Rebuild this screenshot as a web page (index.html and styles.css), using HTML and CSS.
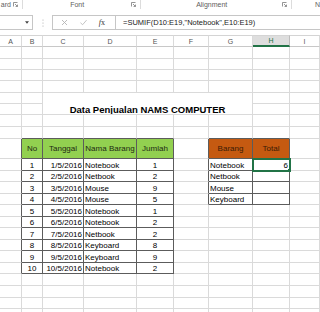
FILE: index.html
```html
<!DOCTYPE html>
<html lang="id">
<head>
  <meta charset="UTF-8" />
  <title>Data Penjualan NAMS COMPUTER</title>
  <link rel="stylesheet" href="styles.css">
</head>
<body>
  <div class="ribbon">
    <div class="grp g-clip"><span class="lbl">ard</span><svg class="launch" viewBox="0 0 5 5"><path d="M0.5 4.5V0.5H4.5M2 2L4.3 4.3M4.5 2.6V4.5H2.6"/></svg></div>
    <div class="grp g-font"><span class="lbl">Font</span><svg class="launch" viewBox="0 0 5 5"><path d="M0.5 4.5V0.5H4.5M2 2L4.3 4.3M4.5 2.6V4.5H2.6"/></svg></div>
    <div class="grp g-align"><span class="lbl">Alignment</span><svg class="launch" viewBox="0 0 5 5"><path d="M0.5 4.5V0.5H4.5M2 2L4.3 4.3M4.5 2.6V4.5H2.6"/></svg></div>
    <div class="grp g-num"><span class="lbl">N</span></div>
  </div>

  <div class="fbar">
    <div class="namebox"><svg class="drop" viewBox="0 0 5 3"><path d="M0 0H5L2.5 3Z"/></svg></div>
    <div class="grip"><svg viewBox="0 0 2 8"><circle cx="1" cy="1" r="0.6"/><circle cx="1" cy="4" r="0.6"/><circle cx="1" cy="7" r="0.6"/></svg></div>
    <div class="fxbox">
      <svg class="ico" viewBox="0 0 7 7"><path d="M1 1L6 6M6 1L1 6"/></svg>
      <svg class="ico" viewBox="0 0 8 7"><path d="M0.5 3.8L3 6L7.5 0.8"/></svg>
      <span class="fx"><i>f</i>x</span>
    </div>
    <div class="formula">=SUMIF(D10:E19,"Notebook",E10:E19)</div>
  </div>

  <table class="sheet">
    <colgroup>
      <col class="c-a"><col class="c-b"><col class="c-c"><col class="c-d"><col class="c-e"><col class="c-f"><col class="c-g"><col class="c-h"><col class="c-i">
    </colgroup>
    <tr class="hdr"><th>A</th><th>B</th><th>C</th><th>D</th><th>E</th><th>F</th><th>G</th><th class="on">H</th><th>I</th></tr>
    <tr class="h12"><td></td><td></td><td></td><td></td><td></td><td></td><td></td><td></td><td></td></tr>
    <tr class="h11"><td></td><td></td><td></td><td></td><td></td><td></td><td></td><td></td><td></td></tr>
    <tr class="h11"><td></td><td></td><td></td><td></td><td></td><td></td><td></td><td></td><td></td></tr>
    <tr class="h12"><td></td><td></td><td></td><td></td><td></td><td></td><td></td><td></td><td></td></tr>
    <tr class="h11"><td></td><td></td><td class="title" colspan="5" rowspan="2">Data Penjualan NAMS COMPUTER</td><td></td><td></td></tr>
    <tr class="h11"><td></td><td></td><td></td><td></td></tr>
    <tr class="h12"><td></td><td></td><td></td><td></td><td></td><td></td><td></td><td></td><td></td></tr>
    <tr class="h12"><td></td><td class="et"></td><td class="et"></td><td class="et"></td><td class="et"></td><td></td><td class="et"></td><td class="et"></td><td></td></tr>
    <tr class="h20 head"><td class="el"></td><td class="t green">No</td><td class="t green">Tanggal</td><td class="t green">Nama Barang</td><td class="t green">Jumlah</td><td class="el"></td><td class="t orange">Barang</td><td class="t orange">Total</td><td></td></tr>
    <tr class="h12"><td class="el"></td><td class="t mid">1</td><td class="t num">1/5/2016</td><td class="t">Notebook</td><td class="t mid">1</td><td class="el"></td><td class="t">Notebook</td><td class="t num sel">6</td><td></td></tr>
    <tr class="h11"><td class="el"></td><td class="t mid">2</td><td class="t num">2/5/2016</td><td class="t">Netbook</td><td class="t mid">2</td><td class="el"></td><td class="t">Netbook</td><td class="t"></td><td></td></tr>
    <tr class="h12"><td class="el"></td><td class="t mid">3</td><td class="t num">3/5/2016</td><td class="t">Mouse</td><td class="t mid">9</td><td class="el"></td><td class="t">Mouse</td><td class="t"></td><td></td></tr>
    <tr class="h11"><td class="el"></td><td class="t mid">4</td><td class="t num">4/5/2016</td><td class="t">Mouse</td><td class="t mid">5</td><td class="el"></td><td class="t">Keyboard</td><td class="t"></td><td></td></tr>
    <tr class="h12"><td class="el"></td><td class="t mid">5</td><td class="t num">5/5/2016</td><td class="t">Notebook</td><td class="t mid">1</td><td></td><td></td><td></td><td></td></tr>
    <tr class="h11"><td class="el"></td><td class="t mid">6</td><td class="t num">6/5/2016</td><td class="t">Notebook</td><td class="t mid">2</td><td></td><td></td><td></td><td></td></tr>
    <tr class="h12"><td class="el"></td><td class="t mid">7</td><td class="t num">7/5/2016</td><td class="t">Netbook</td><td class="t mid">2</td><td></td><td></td><td></td><td></td></tr>
    <tr class="h11"><td class="el"></td><td class="t mid">8</td><td class="t num">8/5/2016</td><td class="t">Keyboard</td><td class="t mid">8</td><td></td><td></td><td></td><td></td></tr>
    <tr class="h12"><td class="el"></td><td class="t mid">9</td><td class="t num">9/5/2016</td><td class="t">Keyboard</td><td class="t mid">9</td><td></td><td></td><td></td><td></td></tr>
    <tr class="h11"><td class="el"></td><td class="t mid">10</td><td class="t num">10/5/2016</td><td class="t">Notebook</td><td class="t mid">2</td><td></td><td></td><td></td><td></td></tr>
    <tr class="h12"><td></td><td></td><td></td><td></td><td></td><td></td><td></td><td></td><td></td></tr>
    <tr class="h12"><td></td><td></td><td></td><td></td><td></td><td></td><td></td><td></td><td></td></tr>
    <tr class="h11"><td></td><td></td><td></td><td></td><td></td><td></td><td></td><td></td><td></td></tr>
    <tr class="h11"><td></td><td></td><td></td><td></td><td></td><td></td><td></td><td></td><td></td></tr>
  </table>
</body>
</html>
```

FILE: styles.css
```css
body { margin: 0; width: 320px; height: 312px; overflow: hidden; background: #fff; font-family: "Liberation Sans", Arial, sans-serif; color: #000; }

/* ribbon group labels */
.ribbon { display: flex; height: 10px; font-size: 7px; line-height: 9px; color: #606060; }
.grp { display: flex; align-items: flex-start; box-sizing: border-box; border-right: 1px solid #dcdcdc; height: 9px; }
.grp .lbl { flex: 1; text-align: center; white-space: nowrap; overflow: hidden; }
.g-clip { width: 23px; }
.g-clip .lbl { text-align: right; padding-right: 2px; }
.g-font { width: 119px; }
.g-align { width: 151px; }
.g-num { flex: 1; border-right: none; }
.g-num .lbl { text-align: left; padding-left: 23px; }
.launch { width: 5px; height: 5px; margin: 2px 4px 0 0; fill: none; stroke: #7a7a7a; stroke-width: 0.8; }

/* formula bar */
.fbar { display: flex; height: 15px; margin-top: 5px; }
.namebox { width: 33px; box-sizing: border-box; border: 1px solid #c6c6c6; border-left: none; display: flex; align-items: center; justify-content: flex-end; padding-right: 3px; }
.drop { width: 4px; height: 3px; fill: #444; }
.grip { width: 19px; display: flex; align-items: center; justify-content: center; }
.grip svg { width: 2px; height: 8px; fill: #a8a8a8; }
.fxbox { width: 64px; box-sizing: border-box; border: 1px solid #c6c6c6; display: flex; align-items: center; justify-content: space-around; padding: 0 4px 0 2px; }
.ico { width: 7px; height: 7px; fill: none; stroke: #b4b4b4; stroke-width: 0.9; }
.fx { font-family: "Liberation Serif", serif; font-size: 8px; color: #333; }
.formula { flex: 1; box-sizing: border-box; border: 1px solid #c6c6c6; border-left: none; border-right: none; font-size: 7.5px; line-height: 13px; padding-left: 7px; color: #222; white-space: nowrap; overflow: hidden; }

/* sheet grid */
.sheet { margin-top: 5px; table-layout: fixed; width: 320px; border-spacing: 0; font-size: 8px; }
.c-a { width: 22px; } .c-b { width: 21px; } .c-c { width: 41px; } .c-d { width: 53px; } .c-e { width: 37px; }
.c-f { width: 35px; } .c-g { width: 44px; } .c-h { width: 37px; } .c-i { width: 30px; }
.sheet th, .sheet td { box-sizing: border-box; padding: 0 1px; border-right: 1px solid #dadada; border-bottom: 1px solid #dadada; white-space: nowrap; overflow: hidden; line-height: 9px; vertical-align: bottom; }
.sheet th { height: 12px; border-top: 1px solid #d4d4d4; border-bottom-color: #c8c8c8; font-weight: normal; font-size: 7px; color: #555; vertical-align: middle; }
.sheet th.on { background: #dedede; color: #217346; border-bottom: 2px solid #217346; border-right-color: #bdbdbd; }
.h11 { height: 11px; }
.h12 { height: 12px; }
.h20 { height: 20px; }

.title { text-align: center; vertical-align: middle; font-weight: bold; font-size: 9.5px; }
.et { border-bottom-color: #5c5c5c !important; }
.el { border-right-color: #5c5c5c !important; }
.t { border-right-color: #5c5c5c !important; border-bottom-color: #5c5c5c !important; }
.head td { vertical-align: middle; text-align: center; }
.green { background: #92d050; color: #1e2a14; }
.orange { background: #c55a11; color: #3a1a05; }
.mid { text-align: center; }
.num { text-align: right; }
.sel { position: relative; outline: 2px solid #217346; outline-offset: -1px; }
.sel::after { content: ""; position: absolute; right: -3px; bottom: -3px; width: 3px; height: 3px; background: #217346; border: 1px solid #fff; }
```
